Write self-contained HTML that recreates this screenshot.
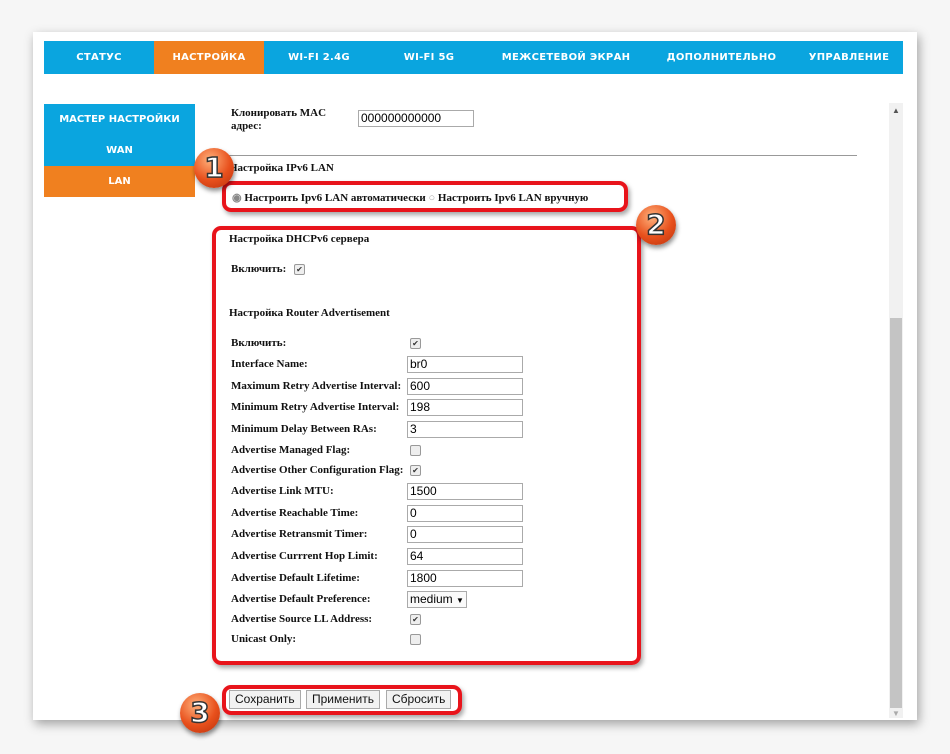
<!DOCTYPE html>
<html><head><meta charset="utf-8"><style>
body{margin:0;width:950px;height:754px;background:#f6f6f6;position:relative;overflow:hidden;font-family:"Liberation Serif",serif;}
.a{position:absolute}
#page{left:33px;top:32px;width:884px;height:688px;background:#fff;box-shadow:2px 4px 10px rgba(0,0,0,.35);}
.nav{top:41px;height:33px;display:flex;align-items:center;justify-content:center;color:#fff;font:bold 10px "DejaVu Sans",sans-serif;letter-spacing:.3px;background:#0aa5df}
.side{left:44px;width:151px;height:31px;display:flex;align-items:center;justify-content:center;color:#fff;font:bold 10px "DejaVu Sans",sans-serif;background:#0aa5df}
.a.o{background:#f0801f}
.lbl{left:231px;font-weight:bold;font-size:11px;color:#111}
.inp{left:407px;width:112px;height:15px;border:1px solid #aaa;font:12px "Liberation Sans",sans-serif;line-height:15px;padding-left:2px;color:#000}
.cb{left:410px;width:9px;height:9px;border:1px solid #999;border-radius:2px;background:#eee;font-size:8px;line-height:9px;text-align:center;color:#333}
.red{border:4px solid #e8141b;border-radius:9px;box-shadow:2px 3px 5px rgba(0,0,0,.35)}
.num{width:40px;height:40px;border-radius:50%;background:radial-gradient(circle at 40% 30%,#ffb07a,#e8501c 55%,#b8300c);box-shadow:1px 3px 5px rgba(0,0,0,.45);color:#fff;font:bold 28px "DejaVu Sans",sans-serif;text-align:center;line-height:40px;-webkit-text-stroke:1.5px #333}
.btn{top:690px;height:17px;border:1px solid #aaa;background:#f2f2f2;font:12px "Liberation Sans",sans-serif;line-height:17px;padding:0 5px;color:#111}
</style></head><body>
<div id="page" class="a"></div>
<div class="a nav" style="left:44px;width:110px">СТАТУС</div>
<div class="a nav o" style="left:154px;width:110px">НАСТРОЙКА</div>
<div class="a nav" style="left:264px;width:110px">WI-FI 2.4G</div>
<div class="a nav" style="left:374px;width:110px">WI-FI 5G</div>
<div class="a nav" style="left:484px;width:164px">МЕЖСЕТЕВОЙ ЭКРАН</div>
<div class="a nav" style="left:648px;width:147px">ДОПОЛНИТЕЛЬНО</div>
<div class="a nav" style="left:795px;width:108px">УПРАВЛЕНИЕ</div>
<div class="a side" style="top:104px">МАСТЕР НАСТРОЙКИ</div>
<div class="a side" style="top:135px">WAN</div>
<div class="a side o" style="top:166px">LAN</div>
<div class="a" style="left:889px;top:103px;width:14px;height:615px;background:#f1f1f1"></div>
<div class="a" style="left:890px;top:318px;width:12px;height:390px;background:#c4c4c4"></div>
<div class="a" style="left:892px;top:106px;font-size:8px;color:#555">▲</div>
<div class="a" style="left:892px;top:709px;font-size:8px;color:#aaa">▼</div>
<div class="a lbl" style="top:107px;line-height:13px">Клонировать MAC<br>адрес:</div>
<div class="a inp" style="left:358px;top:110px;width:112px">000000000000</div>
<div class="a" style="left:222px;top:155px;width:635px;height:1px;background:#999"></div>
<div class="a lbl" style="left:229px;top:162px">Настройка IPv6 LAN</div>
<div class="a lbl" style="left:232px;top:191px"><span style="color:#888">◉</span> Настроить Ipv6 LAN автоматически <span style="color:#aaa">○</span> Настроить Ipv6 LAN вручную</div>
<div class="a lbl" style="left:229px;top:233px">Настройка DHCPv6 сервера</div>
<div class="a lbl" style="top:263px">Включить:</div>
<div class="a cb" style="left:294px;top:264px">✔</div>
<div class="a lbl" style="left:229px;top:307px">Настройка Router Advertisement</div>
<div class="a lbl" style="top:337px">Включить:</div><div class="a cb" style="top:338px">✔</div>
<div class="a lbl" style="top:358px">Interface Name:</div><div class="a inp" style="top:356px">br0</div>
<div class="a lbl" style="top:380px">Maximum Retry Advertise Interval:</div><div class="a inp" style="top:378px">600</div>
<div class="a lbl" style="top:401px">Minimum Retry Advertise Interval:</div><div class="a inp" style="top:399px">198</div>
<div class="a lbl" style="top:423px">Minimum Delay Between RAs:</div><div class="a inp" style="top:421px">3</div>
<div class="a lbl" style="top:444px">Advertise Managed Flag:</div><div class="a cb" style="top:445px"></div>
<div class="a lbl" style="top:464px">Advertise Other Configuration Flag:</div><div class="a cb" style="top:465px">✔</div>
<div class="a lbl" style="top:485px">Advertise Link MTU:</div><div class="a inp" style="top:483px">1500</div>
<div class="a lbl" style="top:507px">Advertise Reachable Time:</div><div class="a inp" style="top:505px">0</div>
<div class="a lbl" style="top:528px">Advertise Retransmit Timer:</div><div class="a inp" style="top:526px">0</div>
<div class="a lbl" style="top:550px">Advertise Currrent Hop Limit:</div><div class="a inp" style="top:548px">64</div>
<div class="a lbl" style="top:572px">Advertise Default Lifetime:</div><div class="a inp" style="top:570px">1800</div>
<div class="a lbl" style="top:593px">Advertise Default Preference:</div><div class="a inp" style="top:591px;width:56px;background:#fafafa">medium <span style="font-size:8px">▼</span></div>
<div class="a lbl" style="top:613px">Advertise Source LL Address:</div><div class="a cb" style="top:614px">✔</div>
<div class="a lbl" style="top:633px">Unicast Only:</div><div class="a cb" style="top:634px"></div>
<div class="a btn" style="left:229px">Сохранить</div>
<div class="a btn" style="left:306px">Применить</div>
<div class="a btn" style="left:386px">Сбросить</div>
<div class="a red" style="left:222px;top:181px;width:398px;height:23px"></div>
<div class="a red" style="left:212px;top:226px;width:421px;height:431px"></div>
<div class="a red" style="left:222px;top:685px;width:232px;height:22px"></div>
<div class="a num" style="left:194px;top:148px">1</div>
<div class="a num" style="left:636px;top:205px">2</div>
<div class="a num" style="left:180px;top:693px">3</div>
</body></html>
